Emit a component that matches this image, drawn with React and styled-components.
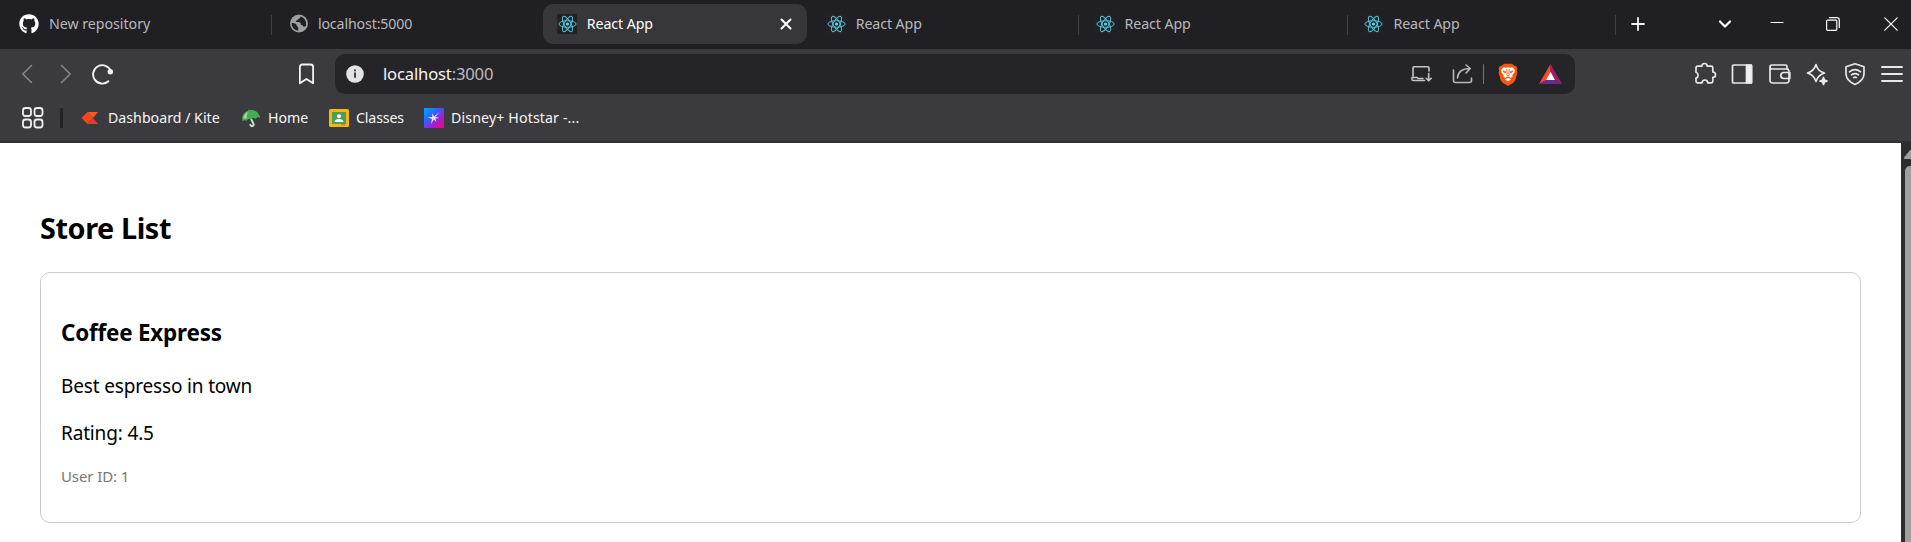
import React from 'react';
import styled, { createGlobalStyle } from 'styled-components';
import { FaGithub } from 'react-icons/fa';

const ui = '"Noto Sans", "Open Sans", sans-serif';

const Global = createGlobalStyle`
  * { box-sizing: border-box; }
  body { margin: 0; font-family: ${ui}; overflow: hidden; }
`;

const Window = styled.div`
  display: flex;
  flex-direction: column;
  width: 100%;
  height: 542px;
  background: #fff;
`;

const TabStrip = styled.div`
  display: flex;
  align-items: center;
  height: 49px;
  flex: none;
  padding-left: 5px;
  background: #202024;
`;

const TabSlot = styled.div`
  display: flex;
  align-items: center;
  width: 268.9px;
  height: 49px;
  flex: none;
`;

const Tab = styled.div`
  display: flex;
  align-items: center;
  width: 264px;
  height: 40px;
  margin: 4px 0 5px;
  padding: 0 15px 0 14px;
  border-radius: 10px;
  background: ${(p) => (p.$active ? '#37363b' : 'transparent')};
  color: ${(p) => (p.$active ? '#fff' : '#b9b8bb')};
`;

const TabSeparator = styled.span`
  width: 1px;
  height: 20px;
  margin-left: 2px;
  background: #404045;
  visibility: ${(p) => (p.$hidden ? 'hidden' : 'visible')};
`;

const Favicon = styled.span`
  display: flex;
  align-items: center;
  justify-content: center;
  width: 20px;
  height: 20px;
  flex: none;
  background: ${(p) => p.$bg || 'transparent'};
`;

const TabTitle = styled.span`
  flex: 1;
  margin-left: 10px;
  font-size: 14.2px;
  line-height: 20px;
  letter-spacing: ${(p) => p.$track || '-0.08px'};
  white-space: nowrap;
`;

const StripButton = styled.div`
  display: flex;
  justify-content: center;
  width: ${(p) => p.$width}px;
  margin-left: ${(p) => p.$gap || 0}px;
  padding-bottom: 1px;
  flex: none;
`;

const Toolbar = styled.div`
  display: flex;
  align-items: center;
  height: 50px;
  flex: none;
  padding: 0 7px 0 16px;
  background: #3b3a3f;
`;

const Nav = styled.div`
  display: flex;
  align-items: center;
  gap: 16px;
  width: 280px;
  flex: none;
`;

const AddressBar = styled.div`
  display: flex;
  align-items: center;
  width: 1240px;
  height: 40px;
  margin-left: 17px;
  padding: 0 13px 0 11px;
  flex: none;
  border-radius: 10px;
  background: #252429;
`;

const Url = styled.span`
  flex: 1;
  margin-left: 19px;
  font-size: 16.6px;
  line-height: 24px;
  letter-spacing: -0.16px;
  color: #f4f4f6;
`;

const Port = styled.span`
  color: #bcbbc0;
`;

const BarActions = styled.div`
  display: flex;
  align-items: center;
`;

const Divider = styled.span`
  width: ${(p) => p.$width || 1}px;
  height: 20px;
  margin: ${(p) => p.$margin || 0};
  flex: none;
  border-radius: 1px;
  background: ${(p) => p.$color};
`;

const Extensions = styled.div`
  display: flex;
  align-items: center;
  gap: 13.5px;
  margin-left: auto;
`;

const BookmarksBar = styled.div`
  display: flex;
  align-items: center;
  height: 44px;
  flex: none;
  padding: 0 0 5px 21px;
  border-bottom: 2px solid #302f34;
  background: #3b3a3f;
`;

const Bookmark = styled.div`
  display: flex;
  align-items: center;
  gap: 7px;
  width: ${(p) => p.$width}px;
  flex: none;
  font-size: 14.2px;
  line-height: 20px;
  letter-spacing: ${(p) => p.$track || 'normal'};
  white-space: nowrap;
  color: #f6f6f7;
`;

const Viewport = styled.div`
  display: flex;
  flex: 1;
  min-height: 0;
`;

const Page = styled.main`
  flex: 1;
  padding: 65px 40px 0;
  color: #000;
`;

const PageTitle = styled.h2`
  margin: 0 0 24px;
  font-size: 28.8px;
  line-height: 40px;
  letter-spacing: -0.4px;
`;

const Card = styled.article`
  height: 251px;
  padding: 44px 20px 0;
  border: 1px solid #ccc;
  border-radius: 10px;
`;

const StoreName = styled.h3`
  margin: 0 0 25px;
  font-size: 22.4px;
  line-height: 31px;
  letter-spacing: -0.18px;
`;

const StoreText = styled.p`
  margin: 0 0 20px;
  font-size: 19px;
  line-height: 27px;
  letter-spacing: -0.16px;
`;

const StoreOwner = styled.small`
  display: block;
  margin-top: -1px;
  font-size: 15px;
  line-height: 21px;
  letter-spacing: -0.1px;
  color: #777;
`;

const Scrollbar = styled.div`
  display: flex;
  flex-direction: column;
  width: 10px;
  flex: none;
  padding: 7px 0 0 3px;
  overflow: hidden;
  background: #2c2c2c;
`;

const Thumb = styled.div`
  width: 14px;
  flex: 1;
  margin: 7px 0 0 1px;
  border-radius: 5px 5px 0 0;
  background: #9f9f9f;
`;

const Line = ({ w = 24, h = 24, color = '#e8e7ea', sw = 1.7, children }) => (
  <svg width={w} height={h} viewBox={`0 0 ${w} ${h}`} fill="none" stroke={color} strokeWidth={sw} strokeLinecap="round" strokeLinejoin="round">
    {children}
  </svg>
);

const ReactLogo = () => (
  <svg width="20" height="20" viewBox="-10.5 -10 20 20" fill="none" stroke="#55c1dc" strokeWidth="1">
    <ellipse rx="8.6" ry="3.3" />
    <ellipse rx="8.6" ry="3.3" transform="rotate(60)" />
    <ellipse rx="8.6" ry="3.3" transform="rotate(120)" />
    <circle r="1.6" fill="#61dafb" stroke="none" />
  </svg>
);

const Globe = () => (
  <svg width="20" height="20" viewBox="0 0 20 20">
    <circle cx="11" cy="9.5" r="9" fill="#9ba0a6" />
    <path d="M11.5 2.300c2 .3.600 2.400-1.200 2.700-.4 1.400-1.500 1.600-2.500 1.700.1 1.300.9 1.400 2.600 1.400 1.900 0 2.500 1.200 2.600 2.900 1.100.1 2 .1 2.200 1.500l2.300.1a7.400 7.400 0 0 0-6-10.300zM3.600 9.100c2.200.1 4.700.3 5 2.200.2 1.300 1.300 1 1.600 2.200v3.200a7.400 7.400 0 0 1-6.600-7.600z" fill="#202024" />
  </svg>
);

const Close = () => (
  <Line w={12} h={12} color="#fff" sw={2}><path d="M1.5 1.5l9 9M10.5 1.5l-9 9" /></Line>
);

const BraveLion = () => (
  <svg width="20" height="23" viewBox="0 0 20 23">
    <path d="M6 .7h8l2.1 2.1 1.8-.1 1.6 3-.7 1.8.6 2-2 7.5-2 2.8L10 23l-5.4-3.2-2-2.8-2-7.5.6-2-.7-1.8 1.6-3 1.8.1z" fill="#fb5607" />
    <path d="M5.4 4.2l2.5.5L10 4.3l2.1.4 2.5-.5 2.4 3-.5 2-2.2 3 .2 1.6-2 1.1-1-.8L10 13.5l-1.5.6-1 .8-2-1.1.2-1.6-2.2-3-.5-2z" fill="#fff" />
    <path d="M6.9 16.2l3.1-1.4 3.1 1.4-3.1 2.4z" fill="#fff" />
    <path d="M4.9 8l3 .7-.8 1.5zM15.1 8l-3 .7.8 1.5zM8.7 6l.5 4-.7 1.7L10 13l1.5-1.3-.7-1.7.5-4" fill="none" stroke="#fb5607" strokeWidth=".9" />
  </svg>
);

const BatTriangle = () => (
  <svg width="23" height="20" viewBox="0 0 23 20">
    <path d="M11.5 0L0 20l7.2-4L11.5 8z" fill="#ff4724" />
    <path d="M11.5 0L23 20l-7.2-4L11.5 8z" fill="#9e1f63" />
    <path d="M0 20h23l-7.2-4H7.2z" fill="#662d91" />
    <path d="M11.5 7.8L16 16H7z" fill="#fff" />
  </svg>
);

const tabs = [
  { title: 'New repository', kind: 'github', track: '-0.02px' },
  { title: 'localhost:5000', kind: 'globe', noSeparator: true, track: '-0.13px' },
  { title: 'React App', kind: 'react', active: true, noSeparator: true },
  { title: 'React App', kind: 'react' },
  { title: 'React App', kind: 'react' },
  { title: 'React App', kind: 'react' },
];

const TabIcon = ({ kind }) => (
  <Favicon $bg={kind === 'react' ? '#222' : undefined}>
    {kind === 'github' && <FaGithub size={20} color="#fff" />}
    {kind === 'globe' && <Globe />}
    {kind === 'react' && <ReactLogo />}
  </Favicon>
);

export default function App() {
  return (
    <Window>
      <Global />
      <TabStrip>
        {tabs.map((t, i) => (
          <TabSlot key={i}>
            <Tab $active={t.active}>
              <TabIcon kind={t.kind} />
              <TabTitle $track={t.track}>{t.title}</TabTitle>
              {t.active && <Close />}
            </Tab>
            <TabSeparator $hidden={t.noSeparator} />
          </TabSlot>
        ))}
        <StripButton $width={14} $gap={13}>
          <Line w={14} h={14} sw={1.8} color="#f3f3f4"><path d="M7 1v12M1 7h12" /></Line>
        </StripButton>
        <StripButton $width={14} $gap={73}>
          <Line w={14} h={10} sw={2.2} color="#fff"><path d="M2 2.5l5 5 5-5" /></Line>
        </StripButton>
        <StripButton $width={14} $gap={38}>
          <Line w={14} h={14} sw={1.2} color="#fff"><path d="M1 5.5h12" /></Line>
        </StripButton>
        <StripButton $width={14} $gap={42}>
          <Line w={14} h={14} sw={1.2} color="#fff"><rect x=".6" y="3.1" width="10.2" height="10.2" rx="1" /><path d="M3.5.6h7.2a2.6 2.6 0 0 1 2.6 2.6v7.2" /></Line>
        </StripButton>
        <StripButton $width={14} $gap={44}>
          <Line w={14} h={14} sw={1.2} color="#fff"><path d="M.8.8l12.4 12.4M13.2.8L.8 13.2" /></Line>
        </StripButton>
      </TabStrip>

      <Toolbar>
        <Nav>
          <Line w={22} color="#88878b" sw={1.6}><path d="M15.5 3.5L6.8 12l8.7 8.5" /></Line>
          <Line w={22} color="#88878b" sw={1.6}><path d="M7.5 3.5l8.7 8.5-8.7 8.5" /></Line>
          <Line w={24} color="#f2f2f3" sw={1.9}><path d="M16.4 19.3a9.2 9.2 0 1 1 2.5-10.2" /><circle cx="18.3" cy="9.8" r="1.8" fill="#f2f2f3" /></Line>
        </Nav>
        <Line w={22} color="#f2f2f3" sw={1.8}><path d="M3.9 4.9a2.4 2.4 0 0 1 2.4-2.4h8.4a2.4 2.4 0 0 1 2.4 2.4v16.3l-6.6-4.3-6.6 4.3z" /></Line>
        <AddressBar>
          <svg width="18" height="18" viewBox="0 0 18 18">
            <circle cx="9" cy="9" r="8.8" fill="#e3e2e7" />
            <path d="M9 7.6v5.2M9 4.6v1.6" stroke="#252429" strokeWidth="1.7" />
          </svg>
          <Url>localhost<Port>:3000</Port></Url>
          <BarActions>
            <Line w={22} h={20} color="#c4c3c9" sw={1.6}><path d="M2 12V4A1.3 1.3 0 0 1 3.3 2.7h13.4A1.3 1.3 0 0 1 18 4V7M1 13.5h5l1 1h5M1 13.5v1.7a1.3 1.3 0 0 0 1.3 1.3H13.5M17.7 9.5v7M15.2 14.3l2.5 2.5 2.5-2.5" /></Line>
            <Divider $margin="0 9px" $color="transparent" />
            <Line w={22} h={22} color="#b8b7bc" sw={1.6}><path d="M1.5 7v10.5A2 2 0 0 0 3.5 19.5h14a2 2 0 0 0 2-2V15M5.5 15c.4-5.5 3.5-9.5 12.5-9.5M14 2l4.3 3.5-4.3 4.5" /></Line>
            <Divider $margin="0 14px 0 9px" $color="#77767b" />
            <BraveLion />
            <Divider $margin="0 10px" $color="transparent" />
            <BatTriangle />
          </BarActions>
        </AddressBar>
        <Extensions>
          <Line><path d="M3 7.7V5.7a1.5 1.5 0 0 1 1.5-1.5h4.3a2.7 2.7 0 0 1 5.4 0h4.1a1.5 1.5 0 0 1 1.5 1.5v4.3a2.7 2.7 0 0 1 0 5.4v3.9a1.5 1.5 0 0 1-1.5 1.5h-3.6a2.8 2.8 0 0 0-5.6 0H4.5A1.5 1.5 0 0 1 3 19.3v-3.2a3.1 3.1 0 0 0 0-5.9z" /></Line>
          <Line><rect x="2.5" y="3" width="19" height="18" rx="1" /><path d="M16.5 3h5v18h-5z" fill="#f0eff2" /></Line>
          <Line><path d="M20 7H4a2 2 0 0 1 0-4h13.500A1.500 1.500 0 0 1 19 4.500V7M2 5v13.500A2.500 2.500 0 0 0 4.500 21h14a2.500 2.500 0 0 0 2.500-2.500v-9A2.500 2.500 0 0 0 18.500 7M21.800 10.500h-6a3 3 0 0 0 0 6h6z" /></Line>
          <Line><path d="M11 2.5c1.300 5 3.300 7 8.500 8.500-5 1.500-7 3.500-8.500 8.500C9.500 14.500 7.500 12.500 2.500 11c5-1.500 7-3.500 8.500-8.500z" /><path d="M18.500 15.500l1 2.500 2.500 1-2.500 1-1 2.500-1-2.500-2.500-1 2.500-1z" fill="#e8e7ea" /></Line>
          <Line><path d="M12 1.8l9 3v7c0 5-4 8.500-9 10.700-5-2.200-9-5.700-9-10.700v-7zM6.500 9.800c3.300-2.600 7.700-2.600 11 0M8.600 12.800c2-1.500 4.800-1.500 6.800 0M10.700 15.600c.8-.6 1.800-.6 2.600 0" /></Line>
          <Line sw={1.9}><path d="M2 5h20M2 12h20M2 19h20" /></Line>
        </Extensions>
      </Toolbar>

      <BookmarksBar>
        <Line w={23} h={23} color="#f0f0f1" sw={1.8}><rect x="2" y="2" width="8" height="8" rx="2.5" /><rect x="13.5" y="2" width="8" height="8" rx="2.5" /><rect x="2" y="13.5" width="8" height="8" rx="2.5" /><rect x="13.5" y="13.5" width="8" height="8" rx="2.5" /></Line>
        <Divider $width={3} $margin="0 18px 0 16px" $color="#222126" />
        <Bookmark $width={160}>
          <Favicon>
            <svg width="20" height="20" viewBox="0 0 20 20"><path d="M6.5 4H17l-5 6z" fill="#ff5722" /><path d="M6.5 4L.5 10l6 6L12 10z" fill="#f6461a" /><path d="M6.500 16H17l-5-6z" fill="#db3d38" /></svg>
          </Favicon>
          Dashboard / Kite
        </Bookmark>
        <Bookmark $width={88}>
          <Favicon>
            <svg width="20" height="20" viewBox="0 0 20 20"><g transform="rotate(-12 10 10)"><path d="M9.500 9.500l1.700 6.500c.6 2.400-2.700 3-3.300.6" fill="none" stroke="#c7e8c7" strokeWidth="2" strokeLinecap="round" /><path d="M1 11.500C1 6 4 2.700 8.700 2.200L9.200 1l1 1c5 .1 8.500 3.500 9 10-1.500-1.800-3.300-1.700-4.600 0-1.500-1.900-3.500-1.900-4.900-.2-1.600-1.700-3.200-1.500-4.400.1-1.300-1.300-2.800-1.400-4.300-.4z" fill="#43ae50" /><path d="M2.500 9C3.200 6 5.500 4 9 3.300 6.800 5 6 7 5.700 9.500z" fill="#a6dba8" /></g></svg>
          </Favicon>
          Home
        </Bookmark>
        <Bookmark $width={95} $track="-0.15px">
          <Favicon>
            <svg width="20" height="20" viewBox="0 0 20 20"><rect y="1" width="20" height="18" rx="1.5" fill="#f4b90c" /><rect x="3" y="4" width="14" height="12" fill="#4d9e5b" /><circle cx="10" cy="8.3" r="2" fill="#fff" /><path d="M5.500 14c0-2 2-3 4.500-3s4.500 1 4.500 3z" fill="#fff" /><path d="M12 16h4v1.500h-4z" fill="#c99200" /></svg>
          </Favicon>
          Classes
        </Bookmark>
        <Bookmark $width={170} $track="0.12px">
          <Favicon>
            <svg width="20" height="20" viewBox="0 0 20 20">
              <defs><linearGradient id="star" x1="0" y1="0" x2="1" y2="1"><stop offset="0" stopColor="#00aaff" /><stop offset=".35" stopColor="#226bff" /><stop offset=".65" stopColor="#a51dd6" /><stop offset="1" stopColor="#ff006e" /></linearGradient></defs>
              <path d="M0 0h20v20H0z" fill="url(#star)" />
              <path d="M15.800 3.800l-4.500 5.300 4.300.8-4.300.6 1.300 3.500-2.800-2.600L7 16l.9-4.900L3.700 9.200l4.600-.1L8.200 5.300l1.900 3.200z" fill="#ece4ee" />
            </svg>
          </Favicon>
          Disney+ Hotstar -...
        </Bookmark>
      </BookmarksBar>

      <Viewport>
        <Page>
          <PageTitle>Store List</PageTitle>
          <Card>
            <StoreName>Coffee Express</StoreName>
            <StoreText>Best espresso in town</StoreText>
            <StoreText>Rating: 4.5</StoreText>
            <StoreOwner>User ID: 1</StoreOwner>
          </Card>
        </Page>
        <Scrollbar>
          <svg width="14" height="9" viewBox="0 0 14 9"><path d="M6 0h2l6 7.500q0 1.500-1 1.500H1Q0 9 0 7.500z" fill="#9f9f9f" /></svg>
          <Thumb />
        </Scrollbar>
      </Viewport>
    </Window>
  );
}
